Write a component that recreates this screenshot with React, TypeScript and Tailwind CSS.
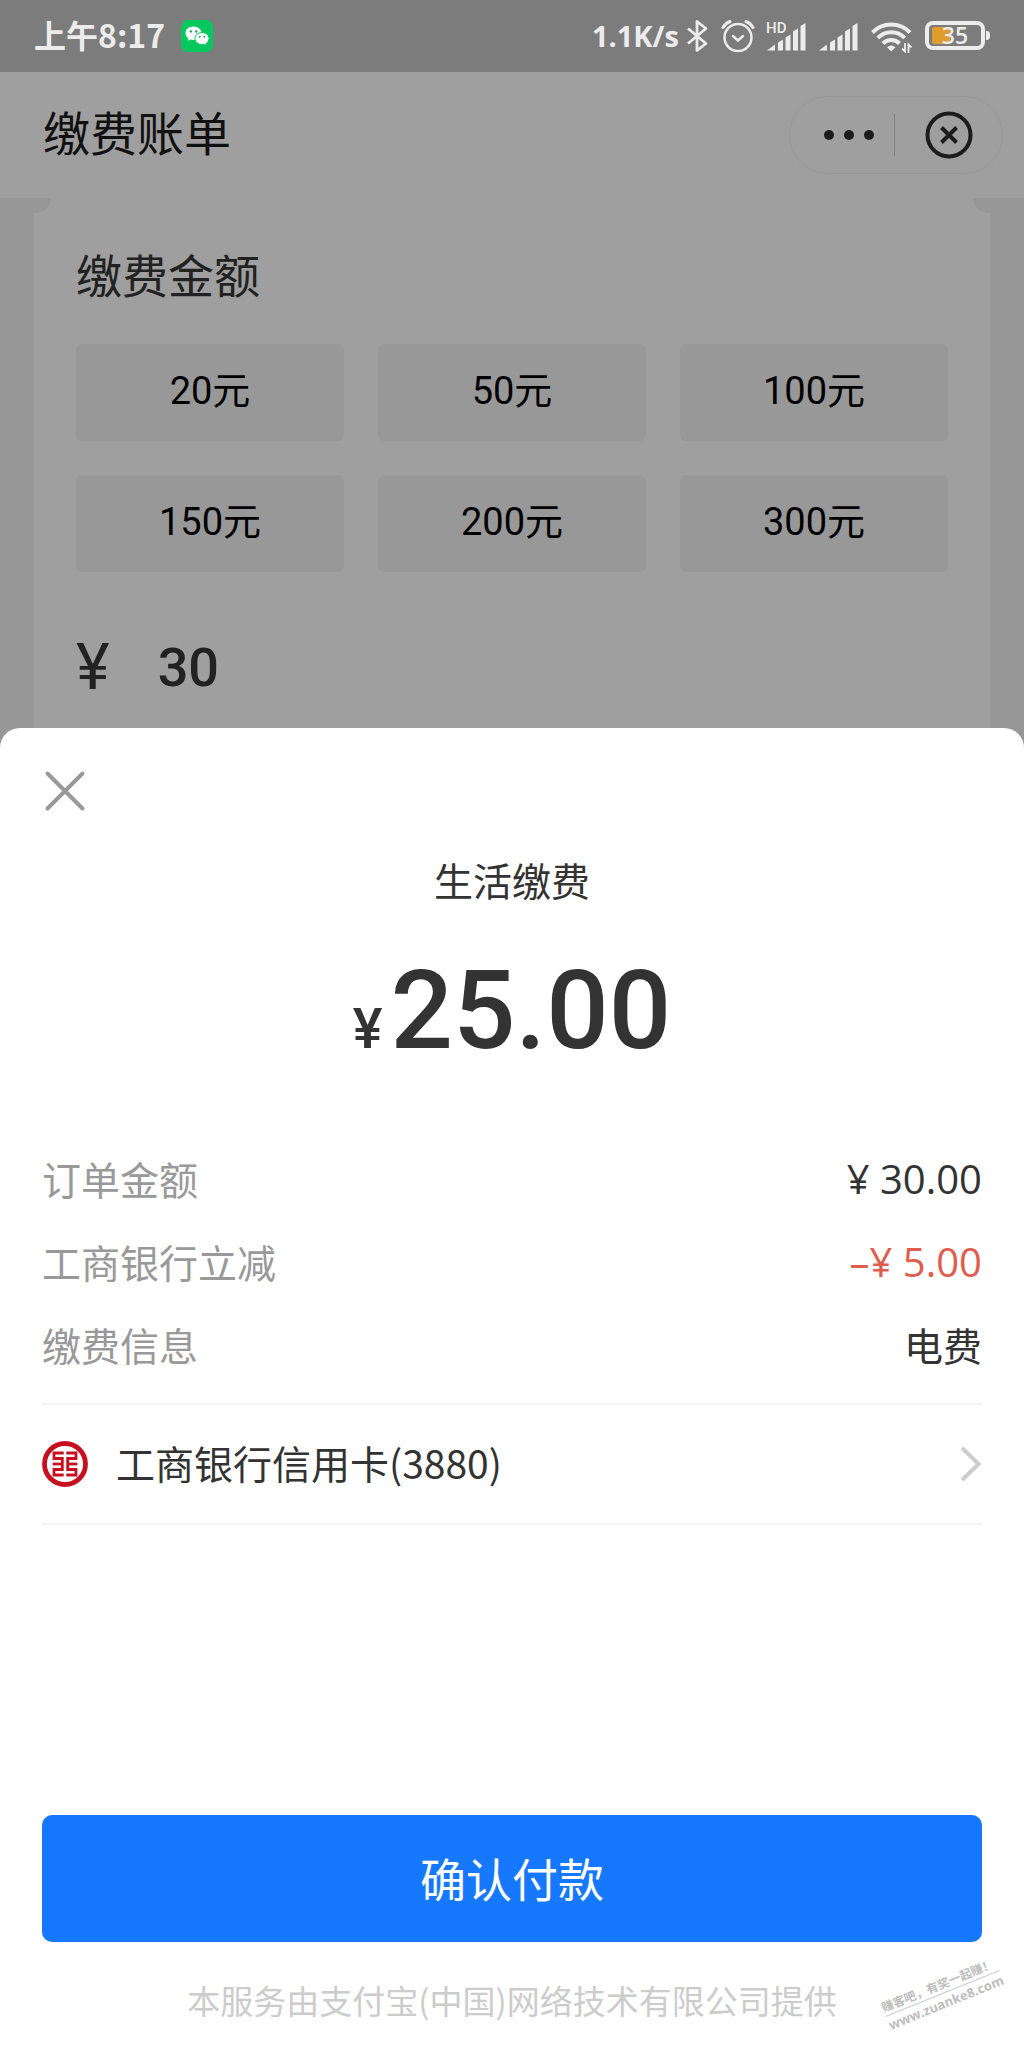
import { useState } from 'react'

interface OrderRow {
  label: string
  value: string
  valueClass: string
}

const amounts = [20, 50, 100, 150, 200, 300]

const orderRows: OrderRow[] = [
  {
    label: '订单金额',
    value: '¥ 30.00',
    valueClass: "text-[40px] text-[#333333] font-['Open_Sans','Noto_Sans_CJK_SC',sans-serif]",
  },
  {
    label: '工商银行立减',
    value: '–¥ 5.00',
    valueClass: "text-[40px] text-[#e05c4d] font-['Open_Sans','Noto_Sans_CJK_SC',sans-serif]",
  },
  { label: '缴费信息', value: '电费', valueClass: 'text-[#333333]' },
]

const WechatIcon = () => (
  <svg width="32" height="32" viewBox="0 0 32 32" aria-hidden="true">
    <rect width="32" height="32" rx="7" fill="#07c75f" />
    <path
      d="M12.500 6.500C7.800 6.500 4.500 9.300 4.500 13.200c0 2 1.100 3.800 2.900 5l-.7 2.800 2.900-1.500c.9.3 1.900.4 2.900.4 4.700 0 8-2.900 8-6.700S17.200 6.500 12.500 6.500z"
      fill="#fff"
    />
    <path
      d="M21 12.500c-4 0-7 2.600-7 6s3 6 7 6c.8 0 1.600-.1 2.300-.3l2.500 1.500-.6-2.400c1.700-1.100 2.800-2.700 2.800-4.800C28 15.100 25 12.500 21 12.500z"
      fill="#fff"
      stroke="#07c75f"
      strokeWidth="1"
    />
    <g fill="#07a852">
      <circle cx="9.800" cy="11.400" r="1.200" />
      <circle cx="15.200" cy="11.400" r="1.200" />
      <circle cx="18.800" cy="16.800" r="1" />
      <circle cx="23.200" cy="16.800" r="1" />
    </g>
  </svg>
)

const BluetoothIcon = () => (
  <svg
    width="22"
    height="34"
    viewBox="0 0 22 34"
    fill="none"
    stroke="currentColor"
    strokeWidth="2.8"
    strokeLinejoin="round"
    aria-hidden="true"
  >
    <path d="M1 9.500 19 24.500 10 31.500V2.500L19 9.500 1 24.500" />
  </svg>
)

const AlarmIcon = () => (
  <svg
    width="34"
    height="34"
    viewBox="0 0 34 34"
    fill="none"
    stroke="currentColor"
    strokeWidth="2.5"
    strokeLinecap="round"
    aria-hidden="true"
  >
    <circle cx="17" cy="18.500" r="13.500" />
    <path d="M12 17l5 4.500 5-4.500" />
    <path d="M2 8.500C3.500 6 6 3.600 9 2.500M32 8.500C30.500 6 28 3.600 25 2.500" strokeWidth="3" />
  </svg>
)

const SignalBars = ({ hd }: { hd?: boolean }) => (
  <svg
    width="40"
    height="34"
    viewBox="0 0 40 34"
    fill="currentColor"
    className="overflow-visible"
    aria-hidden="true"
  >
    <path d="M0 31.500 8 25.500V31.500z" />
    <path d="M11 23.500l5-3v11h-5z" />
    <path d="M18.500 18.500l5-3v16h-5z" />
    <path d="M26 12.500l5-3v22h-5z" />
    <path d="M33.500 7l5-3v27.500h-5z" />
    {hd && (
      <text x="-1" y="14" fontSize="15" fontFamily="Roboto, sans-serif" fontWeight="500">
        HD
      </text>
    )}
  </svg>
)

const WifiIcon = () => (
  <svg width="42" height="34" viewBox="0 0 42 34" aria-hidden="true">
    <g fill="none" stroke="currentColor" strokeWidth="4">
      <path d="M1.500 13.500a26 26 0 0 1 37.500 0" />
      <path d="M6.800 19a18.500 18.500 0 0 1 27 0" />
      <path d="M12 24.500a11.500 11.500 0 0 1 16.500 0" />
    </g>
    <path d="M20.200 32.500l-4.200-4.200a6 6 0 0 1 8.400 0z" fill="currentColor" />
    <path
      d="M34 24v8.500l-3-3M37.500 34v-8.500l3 3"
      fill="none"
      stroke="currentColor"
      strokeWidth="1.800"
    />
  </svg>
)

const BatteryIcon = ({ level }: { level: number }) => (
  <svg width="66" height="34" viewBox="0 0 66 34" aria-hidden="true">
    <rect x="7" y="8" width="18" height="17" rx="2" fill="#e09c2c" />
    <rect
      x="2"
      y="4"
      width="56"
      height="25"
      rx="6"
      fill="none"
      stroke="currentColor"
      strokeWidth="4"
    />
    <path d="M61 12c3 0 4 1 4 4.500s-1 4.500-4 4.500z" fill="currentColor" />
    <text
      x="30"
      y="25"
      fontSize="23"
      textAnchor="middle"
      fontWeight="600"
      fontFamily="Open Sans, sans-serif"
      fill="currentColor"
    >
      {level}
    </text>
  </svg>
)

const IcbcLogo = () => (
  <svg width="46" height="46" viewBox="0 0 46 46" fill="none" stroke="#c7101f" aria-hidden="true">
    <circle cx="23" cy="23" r="20.500" strokeWidth="4.800" />
    <g strokeWidth="2.800">
      <path d="M21.700 12H12V17.500H20.300V28.500H12V34H21.700" />
      <path d="M10.600 23H20.300" />
      <path d="M24.300 12H34V17.500H25.700V28.500H34V34H24.300" />
      <path d="M35.400 23H25.700" />
    </g>
  </svg>
)

const StatusBar = () => (
  <div className="flex h-[72px] items-center justify-between bg-[#7c7c7c] pl-[34px] pr-[33px] text-[#ececec]">
    <div className="flex items-center gap-4">
      <span className="pb-1 text-[32px] font-bold leading-[40px]">上午8:17</span>
      <WechatIcon />
    </div>
    <div className="flex items-center gap-3">
      <div className="flex items-center gap-2">
        <span className="font-['Open_Sans',sans-serif] text-[29px] font-bold leading-[40px]">
          1.1K/s
        </span>
        <BluetoothIcon />
      </div>
      <AlarmIcon />
      <SignalBars hd />
      <SignalBars />
      <WifiIcon />
      <BatteryIcon level={35} />
    </div>
  </div>
)

const Header = () => (
  <header className="flex h-[126px] items-center justify-between bg-[#9f9f9f] pl-[43px] pr-[21px]">
    <h1 className="pb-2 text-[47px] leading-[64px] text-[#111111]">缴费账单</h1>
    <div className="flex h-[78px] w-[214px] items-center rounded-full border border-[#989898]">
      <button type="button" aria-label="更多" className="flex h-full flex-1 items-center justify-end pr-5">
        <svg width="50" height="10" viewBox="0 0 50 10" fill="#1c1c1c" aria-hidden="true">
          <circle cx="5" cy="5" r="5" />
          <circle cx="25" cy="5" r="5" />
          <circle cx="45" cy="5" r="5" />
        </svg>
      </button>
      <span className="h-[42px] w-px bg-[#808080]" />
      <button type="button" aria-label="关闭" className="flex h-full w-[107px] items-center justify-center">
        <svg
          width="48"
          height="48"
          viewBox="0 0 48 48"
          fill="none"
          stroke="#1c1c1c"
          strokeWidth="4"
          aria-hidden="true"
        >
          <circle cx="24" cy="24" r="21.500" />
          <path d="M16.500 16.500l15 15M31.500 16.500l-15 15" />
        </svg>
      </button>
    </div>
  </header>
)

const AmountCard = () => {
  const [amount, setAmount] = useState('30')

  return (
    <section className="mx-[34px] bg-[#9f9f9f]">
      <div className="flex h-[15px] justify-between">
        <span className="w-[17px] rounded-br-full bg-[#979797]" />
        <span className="w-[17px] rounded-bl-full bg-[#979797]" />
      </div>
      <div className="px-[42px] pb-6 pt-7">
        <h2 className="text-[46px] leading-[64px] text-[#222222]">缴费金额</h2>
        <div className="mt-[39px] grid grid-cols-3 gap-[34px]">
          {amounts.map((value) => (
            <button
              key={value}
              type="button"
              onClick={() => setAmount(String(value))}
              className="h-[97px] rounded-md bg-[#989898] pb-1 font-['Roboto','Noto_Sans_CJK_SC',sans-serif] text-[38px] leading-[48px] text-black"
            >
              {value}元
            </button>
          ))}
        </div>
        <div className="mt-[60px] flex h-[72px] items-center gap-12 font-['Roboto',sans-serif] text-[#222222]">
          <label htmlFor="amount" className="text-[64px] leading-[72px]">
            ¥
          </label>
          <input
            id="amount"
            type="text"
            inputMode="decimal"
            value={amount}
            onChange={(e) => setAmount(e.target.value)}
            className="min-w-0 flex-1 bg-transparent text-[54px] font-medium leading-[72px] outline-none"
          />
        </div>
      </div>
    </section>
  )
}

const PaymentSheet = () => (
  <section className="relative flex flex-1 flex-col rounded-t-[20px] bg-white px-[42px] pb-6 pt-10">
    <button type="button" aria-label="关闭" className="h-[46px] w-[46px]">
      <svg
        width="46"
        height="46"
        viewBox="0 0 46 46"
        stroke="#999999"
        strokeWidth="4"
        strokeLinecap="round"
        aria-hidden="true"
      >
        <path d="M5.500 5.500l35 35M40.500 5.500l-35 35" />
      </svg>
    </button>

    <h2 className="mt-[37px] text-center text-[39px] leading-[56px] text-[#333333]">生活缴费</h2>
    <p className="mt-12 flex items-baseline justify-center gap-2 font-['Roboto',sans-serif] font-medium text-[#333333]">
      <span className="text-[56px] leading-[72px]">¥</span>
      <span className="text-[110px] leading-[112px]">25.00</span>
    </p>

    <dl className="mt-[70px] border-b-2 border-[#f5f5f5] pb-[17px] text-[39px] leading-[83px]">
      {orderRows.map((row) => (
        <div key={row.label} className="flex h-[83px] justify-between">
          <dt className="text-[#999999]">{row.label}</dt>
          <dd className={row.valueClass}>{row.value}</dd>
        </div>
      ))}
    </dl>

    <button
      type="button"
      className="flex h-[120px] items-center border-b-2 border-[#f5f5f5] text-left text-[39px] leading-[56px] text-[#333333]"
    >
      <IcbcLogo />
      <span className="ml-7 flex-1 pb-1">工商银行信用卡(3880)</span>
      <svg
        width="22"
        height="36"
        viewBox="0 0 22 36"
        fill="none"
        stroke="#cccccc"
        strokeWidth="4"
        aria-hidden="true"
      >
        <path d="M2 2l16.500 16L2 34" />
      </svg>
    </button>

    <button
      type="button"
      className="mt-auto h-[127px] rounded-[10px] bg-[#1677ff] pb-1 text-[46px] leading-[64px] text-white"
    >
      确认付款
    </button>
    <p className="mt-[34px] text-center text-[33px] leading-[48px] text-[#cccccc]">
      本服务由支付宝(中国)网络技术有限公司提供
    </p>

    {/* site stamp laid over the corner of the sheet */}
    <div className="absolute bottom-9 right-5 -rotate-[22deg] text-[12px] font-bold leading-[18px] text-[#bdbdbd]">
      <p className="border-b border-[#cccccc]">赚客吧，有奖一起赚！</p>
      <p className="font-['Open_Sans',sans-serif] text-[13px]">www.zuanke8.com</p>
    </div>
  </section>
)

export default function App() {
  return (
    <main className="flex min-h-screen flex-col bg-[#979797] font-['Noto_Sans_CJK_SC',sans-serif]">
      <StatusBar />
      <Header />
      <AmountCard />
      <PaymentSheet />
    </main>
  )
}
